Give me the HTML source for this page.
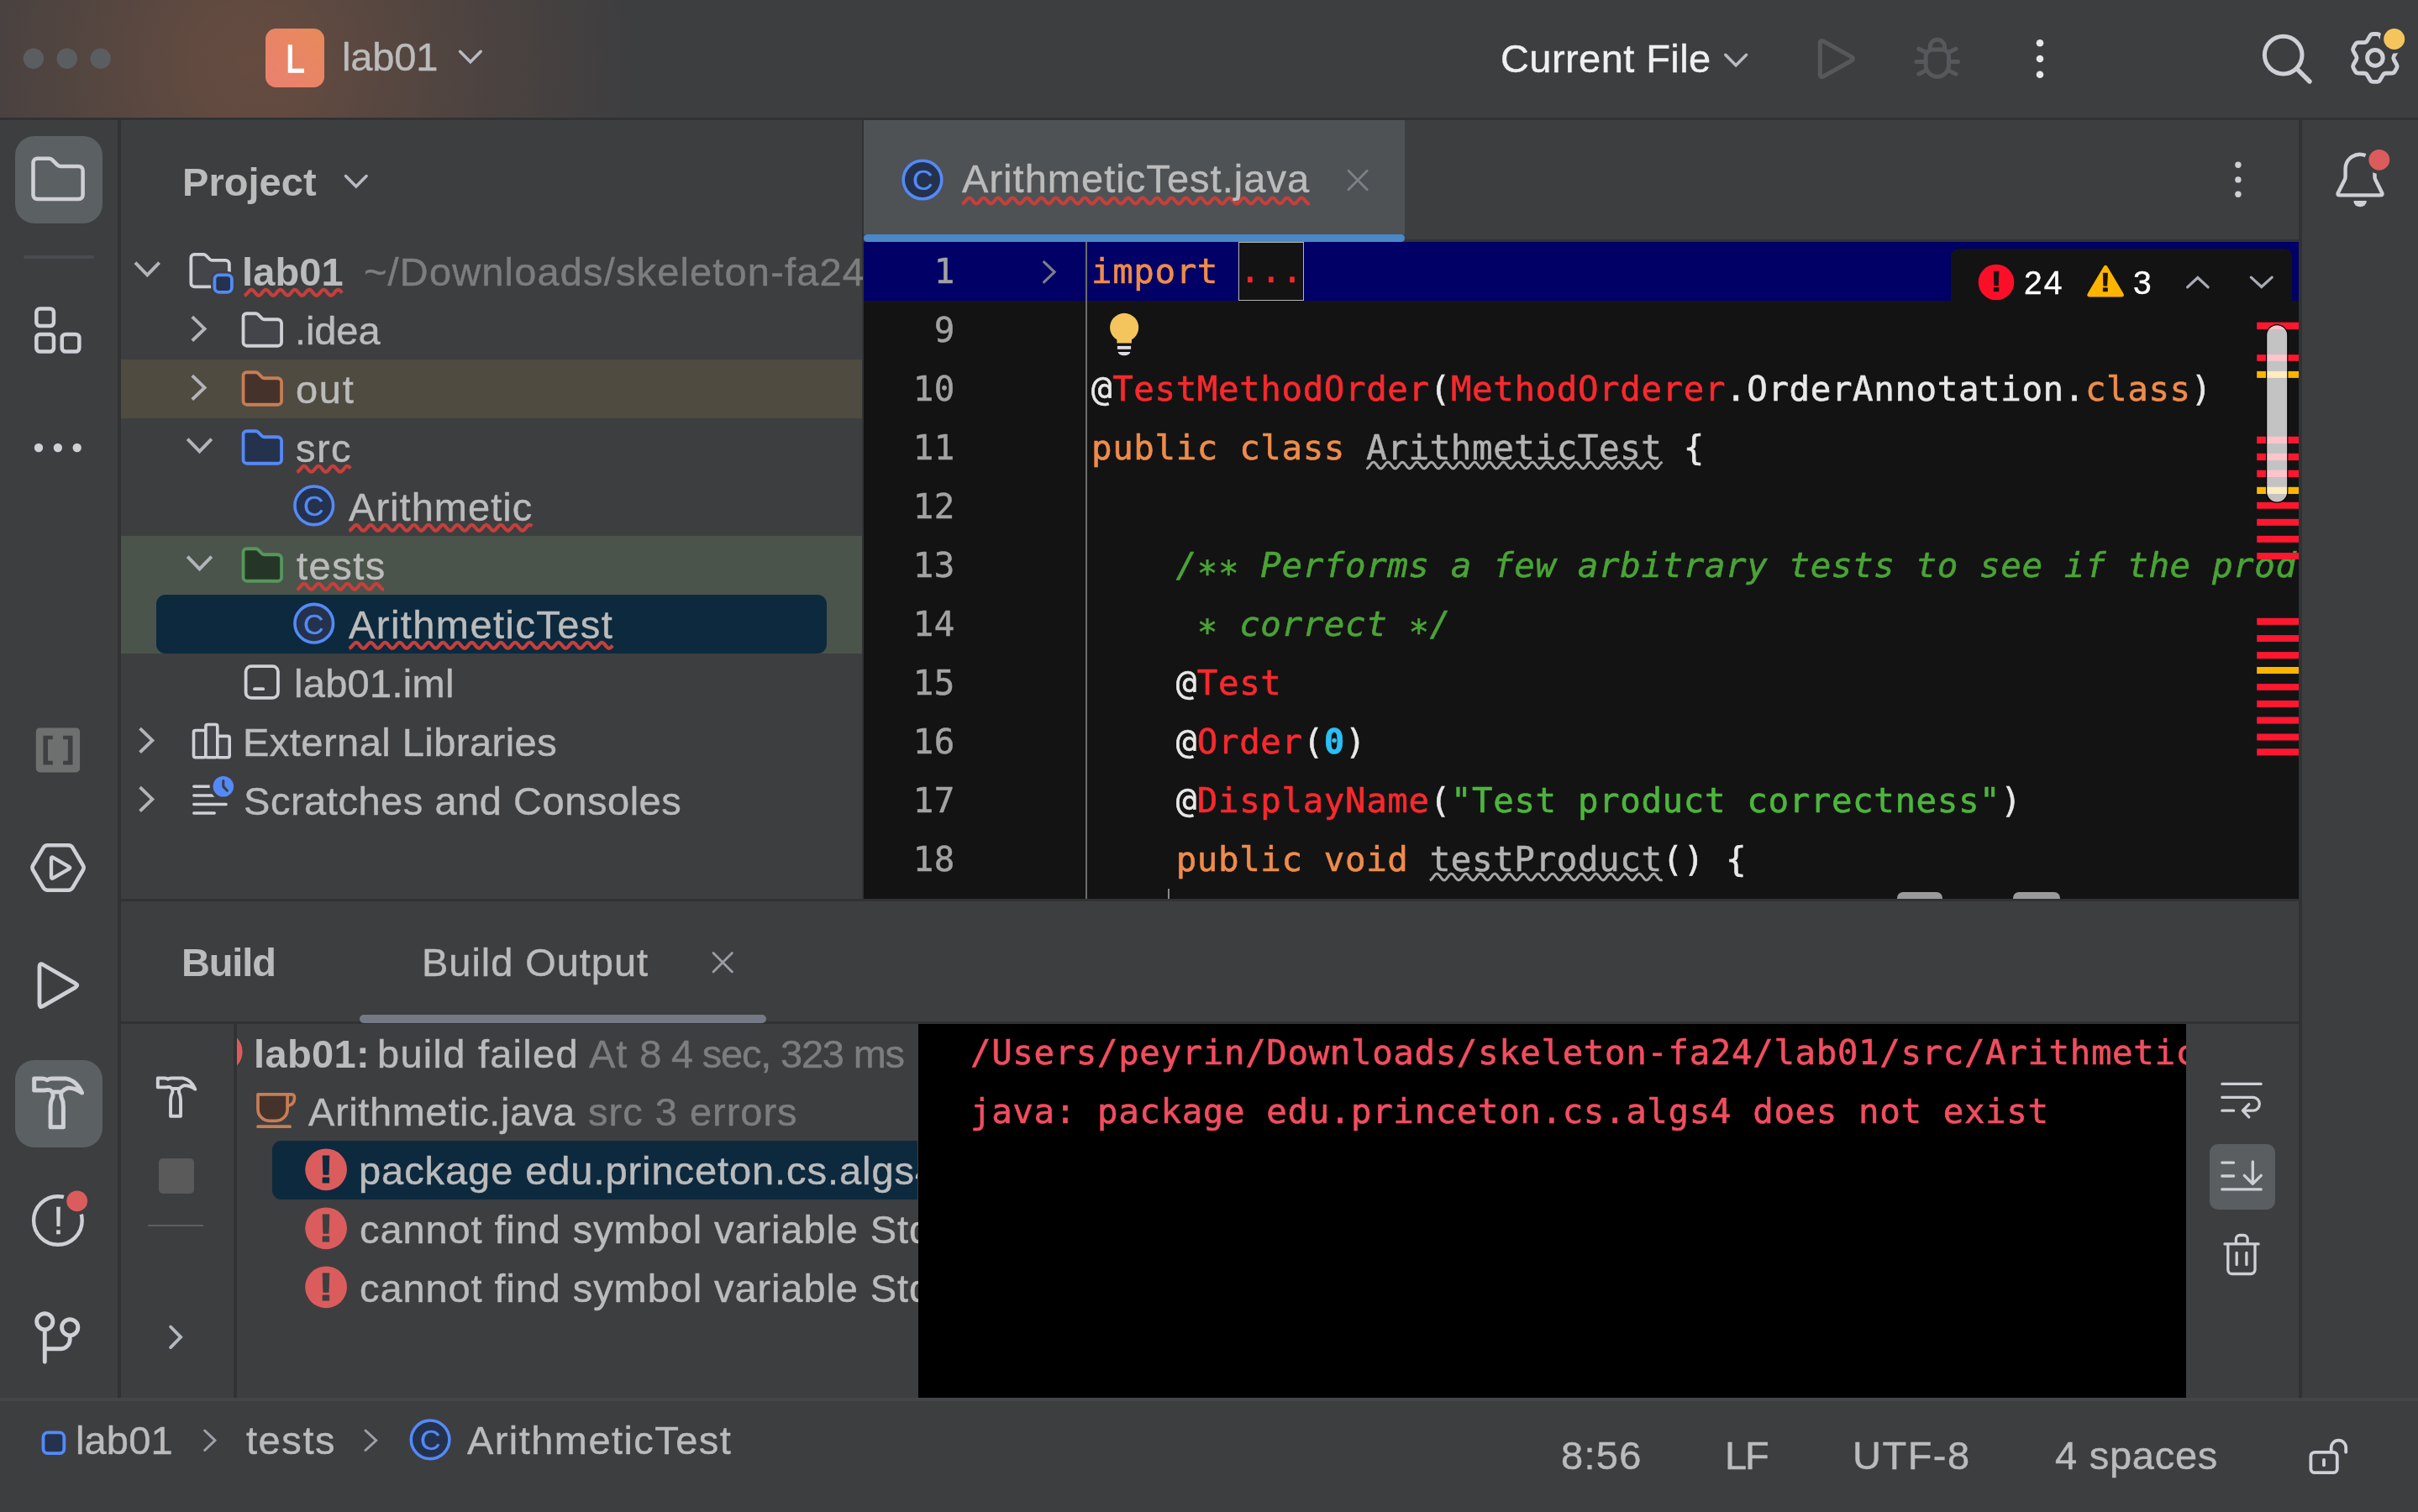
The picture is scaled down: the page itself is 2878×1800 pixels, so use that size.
<!DOCTYPE html><html><head><meta charset="utf-8"><title>lab01 - ArithmeticTest.java</title><style>
html,body{margin:0;padding:0;background:#3d3e40;}
#root{position:relative;width:2878px;height:1800px;overflow:hidden;background:#3d3e40;font-family:"Liberation Sans",sans-serif;}
.b{position:absolute;}
.t{position:absolute;white-space:pre;will-change:transform;}
svg{position:absolute;left:0;top:0;}
.code{will-change:transform;position:absolute;left:1299.0px;white-space:pre;font-family:"DejaVu Sans Mono", "Liberation Mono", monospace;font-size:40.8px;line-height:70px;height:70px;letter-spacing:0.606px;color:#e6e6e6;-webkit-text-stroke:0.6px;}
.ln{will-change:transform;position:absolute;white-space:pre;font-family:"DejaVu Sans Mono", "Liberation Mono", monospace;font-size:40.8px;line-height:70px;height:70px;width:120px;text-align:right;left:1017px;color:#a2a2a2;-webkit-text-stroke:0.5px;letter-spacing:0.606px;}
.k{color:#ef8c4a;} .a{color:#f8292d;} .w{color:#e8e8e8;} .g{color:#b2b2b2;} .c{color:#4aa336;font-style:italic;} .s{color:#4db53c;} .n{color:#2bbff5;font-weight:bold;} .c i{position:relative;top:10px;}
.fold{color:#f5262a;display:inline-block;height:67.6px;line-height:67.6px;margin:0 -1.6px 0 -0.8px;border:1.2px solid #b4b4b4;background:#131314;vertical-align:top;}
.con{will-change:transform;position:absolute;left:1155px;white-space:pre;font-family:"DejaVu Sans Mono", "Liberation Mono", monospace;font-size:40.8px;line-height:70px;height:70px;letter-spacing:0.606px;color:#f24d5f;-webkit-text-stroke:0.6px;}

</style></head><body><div id="root">
<div class="b" style="left:0.0px;top:0.0px;width:2878.0px;height:140.0px;background:#3d3e40;background:radial-gradient(circle 460px at 298px 75px,#654b40 0%,#614a40 16%,#554640 40%,#4a4240 65%,#444040 81%,#3e3e40 97%,#3d3e40 100%);"></div>
<div class="b" style="left:0.0px;top:139.5px;width:2878.0px;height:3.0px;background:#313233;"></div>
<div class="b" style="left:140.0px;top:142.5px;width:4.0px;height:1521.5px;background:#313233;"></div>
<div class="b" style="left:2736.0px;top:142.5px;width:3.6px;height:1521.5px;background:#313233;"></div>
<div class="b" style="left:1026.0px;top:142.5px;width:2.3px;height:928.0px;background:#313233;"></div>
<div class="b" style="left:144.0px;top:1070.0px;width:2592.0px;height:2.6px;background:#313233;"></div>
<div class="b" style="left:144.0px;top:1216.0px;width:2592.0px;height:2.5px;background:#313233;"></div>
<div class="b" style="left:278.0px;top:1218.5px;width:4.0px;height:445.5px;background:#313233;"></div>
<div class="b" style="left:0.0px;top:1664.0px;width:2878.0px;height:3.5px;background:#434548;"></div>
<div class="b" style="left:18.0px;top:162.0px;width:104.0px;height:104.0px;background:#5b6063;border-radius:23px;"></div>
<div class="b" style="left:18.0px;top:1262.0px;width:104.0px;height:104.0px;background:#5b6063;border-radius:23px;"></div>
<div class="b" style="left:28.0px;top:304.0px;width:84.0px;height:3.6px;background:#494b50;border-radius:2px;"></div>
<div class="b" style="left:144.0px;top:428.0px;width:882.0px;height:70.0px;background:#4f4b41;"></div>
<div class="b" style="left:144.0px;top:638.0px;width:882.0px;height:140.0px;background:#4a544b;"></div>
<div class="b" style="left:186.0px;top:708.3px;width:798.0px;height:69.4px;background:#0d293e;border-radius:11px;"></div>
<div class="b" style="left:1028.3px;top:142.5px;width:644.0px;height:136.5px;background:#4e5254;"></div>
<div class="b" style="left:1672.3px;top:285.0px;width:1063.7px;height:2.6px;background:#313233;"></div>
<div class="b" style="left:1028.3px;top:278.5px;width:644.0px;height:9.0px;background:#4a88c7;border-radius:4.5px;"></div>
<div class="b" style="left:1028.3px;top:287.5px;width:1707.7px;height:782.5px;background:#131314;"></div>
<div class="b" style="left:1028.3px;top:287.5px;width:1707.7px;height:70.0px;background:#000066;"></div>
<div class="b" style="left:1291.7px;top:287.5px;width:2.2px;height:782.5px;background:#6b6d6b;"></div>
<div class="b" style="left:1390.2px;top:1058.0px;width:1.6px;height:12.0px;background:#8a8a8a;"></div>
<div class="b" style="left:2322.2px;top:296.0px;width:405.8px;height:62.0px;background:#131314;border-radius:9px 9px 0 0;"></div>
<div class="b" style="left:2258.0px;top:1062.0px;width:54.0px;height:8.0px;background:#9a9a9a;border-radius:7px 7px 0 0;"></div>
<div class="b" style="left:2395.7px;top:1062.0px;width:56.3px;height:8.0px;background:#9a9a9a;border-radius:7px 7px 0 0;"></div>
<div class="b" style="left:427.8px;top:1207.8px;width:484.4px;height:10.4px;background:#747a85;border-radius:5px;"></div>
<div class="b" style="left:324.0px;top:1358.0px;width:768.0px;height:70.0px;background:#0d293e;border-radius:11px 0 0 11px;"></div>
<div class="b" style="left:1093.4px;top:1218.5px;width:1508.8px;height:445.5px;background:#000000;"></div>
<div class="b" style="left:2629.8px;top:1362.0px;width:78.4px;height:77.6px;background:#5a5e61;border-radius:10px;"></div>
<div class="b" style="left:176.2px;top:1458.4px;width:65.7px;height:2.0px;background:#5c5e61;"></div>
<div class="b" style="left:189.0px;top:1379.0px;width:42.0px;height:42.0px;background:#5a5a5a;border-radius:5px;"></div>
<div class="b" style="left:316.0px;top:34.0px;width:70.0px;height:70.0px;background:#e8805f;border-radius:12.5px;background:linear-gradient(45deg,#ea8070 0%,#e78a5a 100%);"></div>
<div class="ln" style="top:288.1px">1</div>
<div class="code" style="top:288.1px;width:1434.6px;overflow:hidden"><span class="k">import</span> <span class="fold">...</span></div>
<div class="ln" style="top:358.1px">9</div>
<div class="ln" style="top:428.1px">10</div>
<div class="code" style="top:428.1px;width:1434.6px;overflow:hidden"><span class="w">@</span><span class="a">TestMethodOrder</span><span class="w">(</span><span class="a">MethodOrderer</span><span class="w">.OrderAnnotation.</span><span class="k">class</span><span class="w">)</span></div>
<div class="ln" style="top:498.1px">11</div>
<div class="code" style="top:498.1px;width:1434.6px;overflow:hidden"><span class="k">public class</span> <span class="g">ArithmeticTest</span><span class="w"> {</span></div>
<div class="ln" style="top:568.1px">12</div>
<div class="ln" style="top:638.1px">13</div>
<div class="code" style="top:638.1px;width:1434.6px;overflow:hidden">    <span class="c">/<i>*</i><i>*</i> Performs a few arbitrary tests to see if the product is</span></div>
<div class="ln" style="top:708.1px">14</div>
<div class="code" style="top:708.1px;width:1434.6px;overflow:hidden">    <span class="c"> <i>*</i> correct <i>*</i>/</span></div>
<div class="ln" style="top:778.1px">15</div>
<div class="code" style="top:778.1px;width:1434.6px;overflow:hidden">    <span class="w">@</span><span class="a">Test</span></div>
<div class="ln" style="top:848.1px">16</div>
<div class="code" style="top:848.1px;width:1434.6px;overflow:hidden">    <span class="w">@</span><span class="a">Order</span><span class="w">(</span><span class="n">0</span><span class="w">)</span></div>
<div class="ln" style="top:918.1px">17</div>
<div class="code" style="top:918.1px;width:1434.6px;overflow:hidden">    <span class="w">@</span><span class="a">DisplayName</span><span class="w">(</span><span class="s">&quot;Test product correctness&quot;</span><span class="w">)</span></div>
<div class="ln" style="top:988.1px">18</div>
<div class="code" style="top:988.1px;width:1434.6px;overflow:hidden">    <span class="k">public void</span> <span class="g">testProduct</span><span class="w">() {</span></div>
<div class="con" style="top:1217.5px;width:1447px;overflow:hidden">/Users/peyrin/Downloads/skeleton-fa24/lab01/src/Arithmetic.java:3:33</div>
<div class="con" style="top:1287.5px">java: package edu.princeton.cs.algs4 does not exist</div>
<svg width="2878" height="1800" viewBox="0 0 2878 1800"><circle cx="39.9" cy="69.7" r="12.2" fill="#5b5e61"/>
<circle cx="79.8" cy="69.7" r="12.2" fill="#5b5e61"/>
<circle cx="119.7" cy="69.7" r="12.2" fill="#5b5e61"/>
<path d="M547.55 61.35L559.90 73.83L572.25 61.35" fill="none" stroke="#b8bbc2" stroke-width="3.5" stroke-linecap="round" stroke-linejoin="miter"/>
<path d="M411.45 209.55L423.80 222.03L436.15 209.55" fill="none" stroke="#b8bbc2" stroke-width="3.5" stroke-linecap="round" stroke-linejoin="miter"/>
<path d="M2053.75 65.25L2066.15 77.73L2078.55 65.25" fill="none" stroke="#b8bbc2" stroke-width="3.5" stroke-linecap="round" stroke-linejoin="miter"/>
<path d="M2170.66 49.25Q2166.30 46.80 2166.30 51.80L2166.30 88.20Q2166.30 93.20 2170.66 90.75L2203.24 72.45Q2207.60 70.00 2203.24 67.55Z" fill="none" stroke="#56585c" stroke-width="5" stroke-linejoin="round"/>
<path d="M2292.2 67A8 8 0 0 1 2300.2 59H2311.5A8 8 0 0 1 2319.5 67V77.5A13.65 13.65 0 0 1 2292.2 77.5ZM2297.2 58V55.8A8.65 8.65 0 0 1 2314.5 55.8V58M2291 61.8L2283.8 58.2M2320.6 61.8L2327.9 58.2M2281 73.5H2290.1M2322 73.5H2330.6M2291 84.6L2283.8 88.2M2320.6 84.6L2327.9 88.2" fill="none" stroke="#56585c" stroke-width="5" stroke-linecap="round" stroke-linejoin="round"/>
<circle cx="2428" cy="51.2" r="4.3" fill="#e8e8e8"/>
<circle cx="2428" cy="70" r="4.3" fill="#e8e8e8"/>
<circle cx="2428" cy="88.8" r="4.3" fill="#e8e8e8"/>
<circle cx="2717.7" cy="65.6" r="22.3" fill="none" stroke="#ced0d6" stroke-width="5"/><path d="M2733.8 81.8L2749 97" stroke="#ced0d6" stroke-width="5.4" stroke-linecap="round"/>
<path d="M2832.78 42.54Q2831.55 40.48 2829.15 40.48L2824.65 40.48Q2822.25 40.48 2821.02 42.54L2817.52 48.47Q2816.30 50.54 2813.90 50.56L2807.01 50.63Q2804.61 50.66 2803.41 52.74L2801.16 56.64Q2799.96 58.72 2801.14 60.81L2804.52 66.81Q2805.70 68.90 2804.52 70.99L2801.14 76.99Q2799.96 79.08 2801.16 81.16L2803.41 85.06Q2804.61 87.14 2807.01 87.17L2813.90 87.24Q2816.30 87.26 2817.52 89.33L2821.02 95.26Q2822.25 97.32 2824.65 97.32L2829.15 97.32Q2831.55 97.32 2832.78 95.26L2836.28 89.33Q2837.50 87.26 2839.90 87.24L2846.79 87.17Q2849.19 87.14 2850.39 85.06L2852.64 81.16Q2853.84 79.08 2852.66 76.99L2849.28 70.99Q2848.10 68.90 2849.28 66.81L2852.66 60.81Q2853.84 58.72 2852.64 56.64L2850.39 52.74Q2849.19 50.66 2846.79 50.63L2839.90 50.56Q2837.50 50.54 2836.28 48.47Z" fill="none" stroke="#ced0d6" stroke-width="4.8" stroke-linejoin="round"/><circle cx="2826.9" cy="68.9" r="9.3" fill="none" stroke="#ced0d6" stroke-width="5"/>
<circle cx="2849.7" cy="46.5" r="17" fill="#3d3e40"/><circle cx="2849.7" cy="46.5" r="12.5" fill="#f3c55c"/>
<path d="M2815.6 185.15A17.3 17.3 0 0 0 2791.6 201.1V210.5Q2791.6 212.5 2790.6 214.3L2782.9 229.5Q2781.6 232.4 2784.8 232.4H2833.2Q2836.4 232.4 2835.1 229.5L2827.5 214.3Q2826.5 212.5 2826.5 210.5V203" fill="none" stroke="#ced0d6" stroke-width="4.4" stroke-linejoin="round"/>
<path d="M2801.3 239H2816.9A7.8 7.4 0 0 1 2801.3 239Z" fill="#ced0d6"/>
<circle cx="2831.8" cy="190.3" r="16.6" fill="#3d3e40"/><circle cx="2831.8" cy="190.3" r="12.4" fill="#db5c5c"/>
<circle cx="2663.9" cy="196.3" r="3.7" fill="#ced0d6"/>
<circle cx="2663.9" cy="213.9" r="3.7" fill="#ced0d6"/>
<circle cx="2663.9" cy="231.3" r="3.7" fill="#ced0d6"/>
<path d="M39.5 193.7A5 5 0 0 1 44.5 188.7H58.5A5 5 0 0 1 62 190.16L68.3 196.46A5 5 0 0 0 71.8 197.9H93.6A5 5 0 0 1 98.6 202.9V232A5 5 0 0 1 93.6 237H44.5A5 5 0 0 1 39.5 232Z" fill="none" stroke="#ced0d6" stroke-width="4.5"/>
<rect x="43.35" y="367.45" width="20.6" height="20.6" rx="4.3" fill="none" stroke="#ced0d6" stroke-width="4.5"/>
<rect x="43.35" y="397.95" width="20.6" height="20.6" rx="4.3" fill="none" stroke="#ced0d6" stroke-width="4.5"/>
<rect x="73.75" y="397.95" width="20.6" height="20.6" rx="4.3" fill="none" stroke="#ced0d6" stroke-width="4.5"/>
<circle cx="46" cy="533" r="5.2" fill="#ced0d6"/>
<circle cx="68.9" cy="533" r="5.2" fill="#ced0d6"/>
<circle cx="91.7" cy="533" r="5.2" fill="#ced0d6"/>
<rect x="42.8" y="866.5" width="52.3" height="52.9" rx="4.5" fill="#6e6f6f"/>
<path d="M51.4 875.7H62.8V880.3H57V905.8H62.8V910.4H51.4ZM86.5 875.7H75.1V880.3H80.9V905.8H75.1V910.4H86.5Z" fill="#3f4042"/>
<path d="M39.37 1036.02Q37.60 1033.00 39.37 1029.98L51.53 1009.32Q53.30 1006.30 56.80 1006.30L81.30 1006.30Q84.80 1006.30 86.57 1009.32L98.73 1029.98Q100.50 1033.00 98.73 1036.02L86.57 1056.68Q84.80 1059.70 81.30 1059.70L56.80 1059.70Q53.30 1059.70 51.53 1056.68Z" fill="none" stroke="#ced0d6" stroke-width="4.6" stroke-linejoin="round"/>
<path d="M63.17 1020.85Q61.00 1019.60 61.00 1022.10L61.00 1044.10Q61.00 1046.60 63.17 1045.35L82.23 1034.35Q84.40 1033.10 82.23 1031.85Z" fill="none" stroke="#ced0d6" stroke-width="4.3" stroke-linejoin="round"/>
<path d="M51.33 1148.50Q47.00 1146.00 47.00 1151.00L47.00 1195.20Q47.00 1200.20 51.33 1197.70L89.57 1175.60Q93.90 1173.10 89.57 1170.60Z" fill="none" stroke="#ced0d6" stroke-width="4.8" stroke-linejoin="round"/>
<path d="M40.7 1284.1H50.4Q53 1284.1 56.1 1285.7Q59 1284.1 61.9 1284.1H79Q91.5 1286.5 97.5 1300.9Q89 1294.8 80.9 1295.2Q77 1296.5 73.3 1300H61.9Q60 1297.6 58 1297.6Q56 1297.2 53 1298H40.7ZM63 1301.9V1305.7Q60.1 1311 60.1 1317.1V1341.8H75.4V1317.1Q75.4 1311 72.8 1305.7V1301.9" fill="none" stroke="#ced0d6" stroke-width="5" stroke-linejoin="round"/>
<g transform="translate(185.7 1281.3) scale(.784) translate(-38 -1281.3)"><path d="M40.7 1284.1H50.4Q53 1284.1 56.1 1285.7Q59 1284.1 61.9 1284.1H79Q91.5 1286.5 97.5 1300.9Q89 1294.8 80.9 1295.2Q77 1296.5 73.3 1300H61.9Q60 1297.6 58 1297.6Q56 1297.2 53 1298H40.7ZM63 1301.9V1305.7Q60.1 1311 60.1 1317.1V1341.8H75.4V1317.1Q75.4 1311 72.8 1305.7V1301.9" fill="none" stroke="#ced0d6" stroke-width="5" stroke-linejoin="round"/></g>
<circle cx="68.9" cy="1453" r="28.8" fill="none" stroke="#ced0d6" stroke-width="4.4"/>
<circle cx="91.7" cy="1429.8" r="16.6" fill="#3d3e40"/><circle cx="91.7" cy="1429.8" r="12.4" fill="#db5c5c"/>
<circle cx="53.3" cy="1573.3" r="9.6" fill="none" stroke="#ced0d6" stroke-width="4.9"/><circle cx="83.2" cy="1580.3" r="9.6" fill="none" stroke="#ced0d6" stroke-width="4.9"/><path d="M53.3 1583.2V1621.2M83.2 1590.2V1594.7A11 11 0 0 1 72.2 1605.7H53.3" fill="none" stroke="#ced0d6" stroke-width="4.9" stroke-linecap="round"/>
<path d="M160.98 312.58L175.30 327.34L189.62 312.58" fill="none" stroke="#b2b4b9" stroke-width="3.9" stroke-linecap="butt" stroke-linejoin="miter"/>
<path d="M223.18 522.58L237.50 537.34L251.82 522.58" fill="none" stroke="#b2b4b9" stroke-width="3.9" stroke-linecap="butt" stroke-linejoin="miter"/>
<path d="M223.18 662.58L237.50 677.34L251.82 662.58" fill="none" stroke="#b2b4b9" stroke-width="3.9" stroke-linecap="butt" stroke-linejoin="miter"/>
<path d="M228.78 377.08L243.54 391.40L228.78 405.72" fill="none" stroke="#b2b4b9" stroke-width="3.9" stroke-linecap="butt" stroke-linejoin="miter"/>
<path d="M228.78 447.08L243.54 461.40L228.78 475.72" fill="none" stroke="#b2b4b9" stroke-width="3.9" stroke-linecap="butt" stroke-linejoin="miter"/>
<path d="M166.58 867.08L181.34 881.40L166.58 895.72" fill="none" stroke="#b2b4b9" stroke-width="3.9" stroke-linecap="butt" stroke-linejoin="miter"/>
<path d="M166.58 937.08L181.34 951.40L166.58 965.72" fill="none" stroke="#b2b4b9" stroke-width="3.9" stroke-linecap="butt" stroke-linejoin="miter"/>
<path transform="translate(222.1 294.1) scale(3.5)" d="M1.5 3.6A1.1 1.1 0 0 1 2.6 2.5H5.75A1.1 1.1 0 0 1 6.53 2.82L7.88 4.18A1.1 1.1 0 0 0 8.66 4.5H13.2A1.3 1.3 0 0 1 14.5 5.8V12.3A1.2 1.2 0 0 1 13.3 13.5H2.7A1.2 1.2 0 0 1 1.5 12.3Z" fill="#43454a" stroke="#ced0d6" stroke-width="1.08"/>
<rect x="253.6" y="325.4" width="24.2" height="24.2" rx="7" fill="#3d3e40" stroke="#3d3e40" stroke-width="5"/>
<rect x="255.4" y="327.3" width="20.5" height="20.5" rx="5.3" fill="#25324d" stroke="#548af7" stroke-width="3.8"/>
<path transform="translate(284.3 364.5) scale(3.5)" d="M1.5 3.6A1.1 1.1 0 0 1 2.6 2.5H5.75A1.1 1.1 0 0 1 6.53 2.82L7.88 4.18A1.1 1.1 0 0 0 8.66 4.5H13.2A1.3 1.3 0 0 1 14.5 5.8V12.3A1.2 1.2 0 0 1 13.3 13.5H2.7A1.2 1.2 0 0 1 1.5 12.3Z" fill="#43454a" stroke="#ced0d6" stroke-width="1.08"/>
<path transform="translate(284.3 434.5) scale(3.5)" d="M1.5 3.6A1.1 1.1 0 0 1 2.6 2.5H5.75A1.1 1.1 0 0 1 6.53 2.82L7.88 4.18A1.1 1.1 0 0 0 8.66 4.5H13.2A1.3 1.3 0 0 1 14.5 5.8V12.3A1.2 1.2 0 0 1 13.3 13.5H2.7A1.2 1.2 0 0 1 1.5 12.3Z" fill="#45322b" stroke="#c77d55" stroke-width="1.08"/>
<path transform="translate(284.3 504.5) scale(3.5)" d="M1.5 3.6A1.1 1.1 0 0 1 2.6 2.5H5.75A1.1 1.1 0 0 1 6.53 2.82L7.88 4.18A1.1 1.1 0 0 0 8.66 4.5H13.2A1.3 1.3 0 0 1 14.5 5.8V12.3A1.2 1.2 0 0 1 13.3 13.5H2.7A1.2 1.2 0 0 1 1.5 12.3Z" fill="#25324d" stroke="#548af7" stroke-width="1.08"/>
<path transform="translate(284.3 644.5) scale(3.5)" d="M1.5 3.6A1.1 1.1 0 0 1 2.6 2.5H5.75A1.1 1.1 0 0 1 6.53 2.82L7.88 4.18A1.1 1.1 0 0 0 8.66 4.5H13.2A1.3 1.3 0 0 1 14.5 5.8V12.3A1.2 1.2 0 0 1 13.3 13.5H2.7A1.2 1.2 0 0 1 1.5 12.3Z" fill="#253627" stroke="#57965c" stroke-width="1.08"/>
<circle cx="373.75" cy="601.8" r="22.8" fill="#25324d" stroke="#548af7" stroke-width="3.6"/>
<circle cx="373.75" cy="742.2" r="22.8" fill="#25324d" stroke="#548af7" stroke-width="3.6"/>
<circle cx="1098" cy="214" r="22.8" fill="#25324d" stroke="#548af7" stroke-width="3.6"/>
<circle cx="512.1" cy="1713.8" r="22.8" fill="#25324d" stroke="#548af7" stroke-width="3.6"/>
<rect x="292.6" y="793.1" width="38.3" height="37.8" rx="6.5" fill="none" stroke="#ced0d6" stroke-width="3.8"/><path d="M303 820.2H313.2" stroke="#ced0d6" stroke-width="3.8" stroke-linecap="round"/>
<rect x="230.5" y="869.5" width="14.4" height="32.25" rx="2.2" fill="#43454a" stroke="#ced0d6" stroke-width="3.6"/>
<rect x="244.9" y="862.5" width="13.9" height="39.25" rx="2.2" fill="#43454a" stroke="#ced0d6" stroke-width="3.6"/>
<rect x="258.8" y="876.4" width="14.4" height="25.35" rx="2.2" fill="#43454a" stroke="#ced0d6" stroke-width="3.6"/>
<path d="M230.8 936.2H252M230.8 946.9H258M230.8 957.4H269.1M230.8 968H255.2" stroke="#ced0d6" stroke-width="3.5" stroke-linecap="round"/>
<circle cx="265.8" cy="936.2" r="16.2" fill="#3d3e40"/><circle cx="265.8" cy="936.2" r="12.3" fill="#548af7"/><path d="M265.8 929.6V936.4L270.4 941.2" fill="none" stroke="#3a3d42" stroke-width="3" stroke-linecap="round" stroke-linejoin="round"/>
<path d="M290.7 351.8L292.2 351.3L293.7 349.9L295.2 348.1L296.7 346.3L298.2 345.1L299.7 344.8L301.2 345.6L302.6 347.1L304.1 349.0L305.6 350.7L307.1 351.7L308.6 351.7L310.1 350.7L311.6 349.0L313.1 347.2L314.6 345.6L316.1 344.8L317.6 345.1L319.1 346.2L320.6 348.0L322.1 349.9L323.6 351.3L325.1 351.8L326.5 351.3L328.0 350.0L329.5 348.1L331.0 346.3L332.5 345.1L334.0 344.8L335.5 345.5L337.0 347.1L338.5 348.9L340.0 350.6L341.5 351.6L343.0 351.7L344.5 350.8L346.0 349.1L347.5 347.2L348.9 345.7L350.4 344.8L351.9 345.0L353.4 346.2L354.9 347.9L356.4 349.8L357.9 351.2L359.4 351.8L360.9 351.4L362.4 350.0L363.9 348.2L365.4 346.4L366.9 345.1L368.4 344.8L369.9 345.5L371.4 347.0L372.8 348.9L374.3 350.6L375.8 351.6L377.3 351.7L378.8 350.8L380.3 349.2L381.8 347.3L383.3 345.7L384.8 344.9L386.3 345.0L387.8 346.1L389.3 347.9L390.8 349.8L392.3 351.2L393.8 351.8L395.3 351.4L396.7 350.1L398.2 348.3L399.7 346.4L401.2 345.2L402.7 344.8L404.2 345.5L405.7 346.9L407.2 348.8" fill="none" stroke="#c63f3b" stroke-width="4.2" stroke-linejoin="round" stroke-linecap="butt"/>
<path d="M353.3 561.8L354.8 561.3L356.3 559.9L357.8 558.1L359.3 556.3L360.7 555.1L362.2 554.8L363.7 555.5L365.2 557.1L366.7 558.9L368.2 560.6L369.7 561.6L371.2 561.7L372.6 560.8L374.1 559.1L375.6 557.3L377.1 555.7L378.6 554.9L380.1 555.0L381.6 556.1L383.1 557.9L384.6 559.7L386.0 561.2L387.5 561.8L389.0 561.4L390.5 560.1L392.0 558.3L393.5 556.5L395.0 555.2L396.5 554.8L398.0 555.4L399.4 556.9L400.9 558.7L402.4 560.5L403.9 561.6L405.4 561.7L406.9 560.9L408.4 559.3L409.9 557.5L411.3 555.8L412.8 554.9L414.3 555.0L415.8 556.0L417.3 557.7" fill="none" stroke="#c63f3b" stroke-width="4.2" stroke-linejoin="round" stroke-linecap="butt"/>
<path d="M415.4 631.8L416.9 631.3L418.4 629.9L419.9 628.1L421.4 626.3L422.9 625.1L424.4 624.8L425.8 625.6L427.3 627.1L428.8 629.0L430.3 630.7L431.8 631.7L433.3 631.7L434.8 630.7L436.3 629.1L437.8 627.2L439.3 625.6L440.8 624.8L442.3 625.1L443.7 626.2L445.2 628.0L446.7 629.8L448.2 631.2L449.7 631.8L451.2 631.4L452.7 630.0L454.2 628.2L455.7 626.4L457.2 625.1L458.7 624.8L460.2 625.5L461.6 627.0L463.1 628.9L464.6 630.6L466.1 631.6L467.6 631.7L469.1 630.8L470.6 629.2L472.1 627.3L473.6 625.7L475.1 624.9L476.6 625.0L478.1 626.1L479.5 627.8L481.0 629.7L482.5 631.2L484.0 631.8L485.5 631.4L487.0 630.1L488.5 628.3L490.0 626.5L491.5 625.2L493.0 624.8L494.5 625.4L496.0 626.9L497.4 628.7L498.9 630.5L500.4 631.6L501.9 631.7L503.4 630.9L504.9 629.3L506.4 627.4L507.9 625.8L509.4 624.9L510.9 625.0L512.4 626.0L513.9 627.7L515.3 629.6L516.8 631.1L518.3 631.8L519.8 631.5L521.3 630.2L522.8 628.4L524.3 626.6L525.8 625.3L527.3 624.8L528.8 625.4L530.3 626.8L531.8 628.6L533.3 630.4L534.7 631.5L536.2 631.8L537.7 631.0L539.2 629.4L540.7 627.5L542.2 625.9L543.7 624.9L545.2 624.9L546.7 625.9L548.2 627.6L549.7 629.5L551.2 631.0L552.6 631.8L554.1 631.5L555.6 630.3L557.1 628.5L558.6 626.7L560.1 625.3L561.6 624.8L563.1 625.3L564.6 626.7L566.1 628.5L567.6 630.3L569.1 631.5L570.5 631.8L572.0 631.0L573.5 629.5L575.0 627.6L576.5 626.0L578.0 624.9L579.5 624.9L581.0 625.9L582.5 627.5L584.0 629.4L585.5 631.0L587.0 631.8L588.4 631.5L589.9 630.4L591.4 628.6L592.9 626.8L594.4 625.4L595.9 624.8L597.4 625.2L598.9 626.6L600.4 628.4L601.9 630.2L603.4 631.4L604.9 631.8L606.3 631.1L607.8 629.6L609.3 627.8L610.8 626.0L612.3 625.0L613.8 624.9L615.3 625.8L616.8 627.4L618.3 629.3L619.8 630.9L621.3 631.7L622.8 631.6L624.2 630.5L625.7 628.8L627.2 626.9L628.7 625.4L630.2 624.8L631.7 625.2L633.2 626.5" fill="none" stroke="#c63f3b" stroke-width="4.2" stroke-linejoin="round" stroke-linecap="butt"/>
<path d="M353.3 701.8L354.8 701.3L356.3 699.9L357.7 698.1L359.2 696.3L360.7 695.1L362.2 694.8L363.7 695.5L365.2 697.0L366.6 698.9L368.1 700.6L369.6 701.6L371.1 701.7L372.6 700.8L374.1 699.2L375.5 697.4L377.0 695.8L378.5 694.9L380.0 695.0L381.5 696.0L383.0 697.7L384.4 699.6L385.9 701.1L387.4 701.8L388.9 701.5L390.4 700.3L391.9 698.5L393.3 696.7L394.8 695.3L396.3 694.8L397.8 695.3L399.3 696.7L400.8 698.5L402.2 700.3L403.7 701.5L405.2 701.8L406.7 701.1L408.2 699.6L409.6 697.7L411.1 696.0L412.6 695.0L414.1 694.9L415.6 695.8L417.1 697.4L418.5 699.2L420.0 700.8L421.5 701.7L423.0 701.6L424.5 700.6L426.0 698.9L427.4 697.0L428.9 695.5L430.4 694.8L431.9 695.1L433.4 696.3L434.9 698.1L436.3 699.9L437.8 701.3L439.3 701.8L440.8 701.3L442.3 699.9L443.8 698.1L445.2 696.3L446.7 695.1L448.2 694.8L449.7 695.5L451.2 697.0L452.7 698.9L454.1 700.6L455.6 701.6L457.1 701.7" fill="none" stroke="#c63f3b" stroke-width="4.2" stroke-linejoin="round" stroke-linecap="butt"/>
<path d="M415.4 771.8L416.9 771.3L418.4 769.9L419.9 768.1L421.4 766.3L422.9 765.1L424.4 764.8L425.9 765.6L427.4 767.1L428.8 769.0L430.3 770.7L431.8 771.7L433.3 771.7L434.8 770.7L436.3 769.0L437.8 767.2L439.3 765.6L440.8 764.8L442.3 765.1L443.8 766.3L445.3 768.0L446.8 769.9L448.3 771.3L449.8 771.8L451.3 771.3L452.8 769.9L454.3 768.1L455.7 766.3L457.2 765.1L458.7 764.8L460.2 765.6L461.7 767.1L463.2 769.0L464.7 770.6L466.2 771.7L467.7 771.7L469.2 770.7L470.7 769.1L472.2 767.2L473.7 765.6L475.2 764.8L476.7 765.1L478.2 766.2L479.7 768.0L481.1 769.8L482.6 771.2L484.1 771.8L485.6 771.3L487.1 770.0L488.6 768.1L490.1 766.4L491.6 765.1L493.1 764.8L494.6 765.5L496.1 767.0L497.6 768.9L499.1 770.6L500.6 771.6L502.1 771.7L503.6 770.8L505.1 769.1L506.6 767.2L508.0 765.7L509.5 764.8L511.0 765.0L512.5 766.2L514.0 767.9L515.5 769.8L517.0 771.2L518.5 771.8L520.0 771.4L521.5 770.0L523.0 768.2L524.5 766.4L526.0 765.1L527.5 764.8L529.0 765.5L530.5 767.0L532.0 768.9L533.4 770.6L534.9 771.6L536.4 771.7L537.9 770.8L539.4 769.2L540.9 767.3L542.4 765.7L543.9 764.9L545.4 765.0L546.9 766.2L548.4 767.9L549.9 769.8L551.4 771.2L552.9 771.8L554.4 771.4L555.9 770.1L557.4 768.2L558.9 766.4L560.3 765.2L561.8 764.8L563.3 765.5L564.8 767.0L566.3 768.8L567.8 770.6L569.3 771.6L570.8 771.7L572.3 770.8L573.8 769.2L575.3 767.3L576.8 765.7L578.3 764.9L579.8 765.0L581.3 766.1L582.8 767.9L584.3 769.7L585.7 771.2L587.2 771.8L588.7 771.4L590.2 770.1L591.7 768.3L593.2 766.5L594.7 765.2L596.2 764.8L597.7 765.5L599.2 766.9L600.7 768.8L602.2 770.5L603.7 771.6L605.2 771.7L606.7 770.8L608.2 769.2L609.7 767.3L611.2 765.7L612.6 764.9L614.1 765.0L615.6 766.1L617.1 767.8L618.6 769.7L620.1 771.2L621.6 771.8L623.1 771.4L624.6 770.1L626.1 768.3L627.6 766.5L629.1 765.2L630.6 764.8L632.1 765.4L633.6 766.9L635.1 768.8L636.6 770.5L638.0 771.6L639.5 771.7L641.0 770.9L642.5 769.3L644.0 767.4L645.5 765.8L647.0 764.9L648.5 765.0L650.0 766.1L651.5 767.8L653.0 769.7L654.5 771.1L656.0 771.8L657.5 771.4L659.0 770.2L660.5 768.3L662.0 766.5L663.5 765.2L664.9 764.8L666.4 765.4L667.9 766.9L669.4 768.7L670.9 770.5L672.4 771.6L673.9 771.7L675.4 770.9L676.9 769.3L678.4 767.4L679.9 765.8L681.4 764.9L682.9 765.0L684.4 766.0L685.9 767.7L687.4 769.6L688.9 771.1L690.3 771.8L691.8 771.4L693.3 770.2L694.8 768.4L696.3 766.6L697.8 765.2L699.3 764.8L700.8 765.4L702.3 766.8L703.8 768.7L705.3 770.4L706.8 771.6L708.3 771.7L709.8 770.9L711.3 769.3L712.8 767.5L714.3 765.8L715.8 764.9L717.2 765.0L718.7 766.0L720.2 767.7L721.7 769.6L723.2 771.1L724.7 771.8L726.2 771.5L727.7 770.2L729.2 768.4" fill="none" stroke="#c63f3b" stroke-width="4.2" stroke-linejoin="round" stroke-linecap="butt"/>
<path d="M1145.0 242.5L1146.5 242.0L1148.0 240.6L1149.5 238.8L1151.0 237.0L1152.5 235.8L1154.0 235.5L1155.5 236.3L1157.0 237.8L1158.5 239.7L1159.9 241.4L1161.4 242.4L1162.9 242.4L1164.4 241.4L1165.9 239.7L1167.4 237.8L1168.9 236.3L1170.4 235.5L1171.9 235.8L1173.4 237.0L1174.9 238.7L1176.4 240.6L1177.9 242.0L1179.4 242.5L1180.9 242.0L1182.4 240.6L1183.9 238.8L1185.4 237.0L1186.8 235.8L1188.3 235.5L1189.8 236.3L1191.3 237.8L1192.8 239.7L1194.3 241.4L1195.8 242.4L1197.3 242.4L1198.8 241.4L1200.3 239.8L1201.8 237.9L1203.3 236.3L1204.8 235.5L1206.3 235.8L1207.8 236.9L1209.3 238.7L1210.8 240.6L1212.3 242.0L1213.8 242.5L1215.2 242.0L1216.7 240.7L1218.2 238.8L1219.7 237.0L1221.2 235.8L1222.7 235.5L1224.2 236.2L1225.7 237.8L1227.2 239.6L1228.7 241.3L1230.2 242.3L1231.7 242.4L1233.2 241.4L1234.7 239.8L1236.2 237.9L1237.7 236.3L1239.2 235.5L1240.7 235.8L1242.1 236.9L1243.6 238.7L1245.1 240.5L1246.6 241.9L1248.1 242.5L1249.6 242.0L1251.1 240.7L1252.6 238.9L1254.1 237.1L1255.6 235.8L1257.1 235.5L1258.6 236.2L1260.1 237.7L1261.6 239.6L1263.1 241.3L1264.6 242.3L1266.1 242.4L1267.6 241.5L1269.1 239.8L1270.5 237.9L1272.0 236.4L1273.5 235.6L1275.0 235.7L1276.5 236.9L1278.0 238.6L1279.5 240.5L1281.0 241.9L1282.5 242.5L1284.0 242.1L1285.5 240.7L1287.0 238.9L1288.5 237.1L1290.0 235.8L1291.5 235.5L1293.0 236.2L1294.5 237.7L1296.0 239.6L1297.4 241.3L1298.9 242.3L1300.4 242.4L1301.9 241.5L1303.4 239.9L1304.9 238.0L1306.4 236.4L1307.9 235.6L1309.4 235.7L1310.9 236.9L1312.4 238.6L1313.9 240.5L1315.4 241.9L1316.9 242.5L1318.4 242.1L1319.9 240.8L1321.4 238.9L1322.9 237.1L1324.4 235.9L1325.8 235.5L1327.3 236.2L1328.8 237.7L1330.3 239.5L1331.8 241.3L1333.3 242.3L1334.8 242.4L1336.3 241.5L1337.8 239.9L1339.3 238.0L1340.8 236.4L1342.3 235.6L1343.8 235.7L1345.3 236.8L1346.8 238.6L1348.3 240.4L1349.8 241.9L1351.3 242.5L1352.7 242.1L1354.2 240.8L1355.7 239.0L1357.2 237.1L1358.7 235.9L1360.2 235.5L1361.7 236.2L1363.2 237.6L1364.7 239.5L1366.2 241.2L1367.7 242.3L1369.2 242.4L1370.7 241.5L1372.2 239.9L1373.7 238.0L1375.2 236.4L1376.7 235.6L1378.2 235.7L1379.6 236.8L1381.1 238.5L1382.6 240.4L1384.1 241.9L1385.6 242.5L1387.1 242.1L1388.6 240.8L1390.1 239.0L1391.6 237.2L1393.1 235.9L1394.6 235.5L1396.1 236.1L1397.6 237.6L1399.1 239.5L1400.6 241.2L1402.1 242.3L1403.6 242.4L1405.1 241.6L1406.6 239.9L1408.0 238.1L1409.5 236.4L1411.0 235.6L1412.5 235.7L1414.0 236.8L1415.5 238.5L1417.0 240.4L1418.5 241.9L1420.0 242.5L1421.5 242.1L1423.0 240.8L1424.5 239.0L1426.0 237.2L1427.5 235.9L1429.0 235.5L1430.5 236.1L1432.0 237.6L1433.5 239.5L1434.9 241.2L1436.4 242.3L1437.9 242.4L1439.4 241.6L1440.9 240.0L1442.4 238.1L1443.9 236.5L1445.4 235.6L1446.9 235.7L1448.4 236.8L1449.9 238.5L1451.4 240.4L1452.9 241.8L1454.4 242.5L1455.9 242.1L1457.4 240.9L1458.9 239.0L1460.4 237.2L1461.9 235.9L1463.3 235.5L1464.8 236.1L1466.3 237.6L1467.8 239.4L1469.3 241.2L1470.8 242.3L1472.3 242.4L1473.8 241.6L1475.3 240.0L1476.8 238.1L1478.3 236.5L1479.8 235.6L1481.3 235.7L1482.8 236.7L1484.3 238.5L1485.8 240.3L1487.3 241.8L1488.8 242.5L1490.2 242.1L1491.7 240.9L1493.2 239.1L1494.7 237.3L1496.2 235.9L1497.7 235.5L1499.2 236.1L1500.7 237.5L1502.2 239.4L1503.7 241.1L1505.2 242.3L1506.7 242.4L1508.2 241.6L1509.7 240.0L1511.2 238.1L1512.7 236.5L1514.2 235.6L1515.7 235.7L1517.2 236.7L1518.6 238.4L1520.1 240.3L1521.6 241.8L1523.1 242.5L1524.6 242.2L1526.1 240.9L1527.6 239.1L1529.1 237.3L1530.6 235.9L1532.1 235.5L1533.6 236.1L1535.1 237.5L1536.6 239.4L1538.1 241.1L1539.6 242.3L1541.1 242.4L1542.6 241.6L1544.1 240.1L1545.5 238.2L1547.0 236.5L1548.5 235.6L1550.0 235.7L1551.5 236.7L1553.0 238.4L1554.5 240.3L1556.0 241.8L1557.5 242.5L1559.0 242.2" fill="none" stroke="#c63f3b" stroke-width="4.2" stroke-linejoin="round" stroke-linecap="butt"/>
<path d="M1626.2 557.9L1627.7 557.3L1629.2 555.8L1630.7 553.7L1632.2 551.7L1633.7 550.4L1635.2 550.1L1636.7 551.0L1638.2 552.7L1639.7 554.8L1641.2 556.7L1642.7 557.8L1644.2 557.7L1645.7 556.6L1647.2 554.7L1648.7 552.6L1650.2 550.9L1651.7 550.1L1653.2 550.5L1654.7 551.8L1656.2 553.8L1657.7 555.9L1659.2 557.4L1660.7 557.9L1662.2 557.3L1663.7 555.7L1665.2 553.6L1666.7 551.6L1668.2 550.4L1669.7 550.2L1671.2 551.1L1672.7 552.9L1674.2 555.0L1675.7 556.8L1677.2 557.8L1678.7 557.7L1680.2 556.5L1681.7 554.6L1683.2 552.5L1684.7 550.8L1686.2 550.1L1687.7 550.5L1689.2 551.9L1690.7 554.0L1692.2 556.0L1693.7 557.5L1695.2 557.9L1696.7 557.2L1698.2 555.6L1699.7 553.5L1701.2 551.5L1702.7 550.3L1704.2 550.2L1705.7 551.2L1707.2 553.0L1708.7 555.1L1710.2 556.9L1711.7 557.8L1713.2 557.7L1714.7 556.4L1716.2 554.5L1717.7 552.4L1719.2 550.8L1720.7 550.1L1722.2 550.6L1723.7 552.1L1725.2 554.1L1726.7 556.1L1728.2 557.5L1729.7 557.9L1731.2 557.1L1732.7 555.4L1734.2 553.3L1735.7 551.4L1737.2 550.3L1738.7 550.2L1740.2 551.3L1741.7 553.1L1743.2 555.2L1744.7 557.0L1746.2 557.8L1747.7 557.6L1749.2 556.3L1750.7 554.3L1752.2 552.3L1753.7 550.7L1755.2 550.1L1756.7 550.6L1758.2 552.2L1759.7 554.2L1761.2 556.2L1762.7 557.6L1764.2 557.9L1765.7 557.0L1767.2 555.3L1768.7 553.2L1770.2 551.3L1771.7 550.2L1773.2 550.2L1774.7 551.3L1776.2 553.2L1777.7 555.3L1779.2 557.0L1780.7 557.9L1782.2 557.6L1783.7 556.2L1785.2 554.2L1786.7 552.2L1788.2 550.6L1789.7 550.1L1791.2 550.7L1792.7 552.3L1794.2 554.3L1795.7 556.3L1797.2 557.6L1798.7 557.8L1800.2 557.0L1801.7 555.2L1803.1 553.1L1804.6 551.3L1806.1 550.2L1807.6 550.3L1809.1 551.4L1810.6 553.3L1812.1 555.4L1813.6 557.1L1815.1 557.9L1816.6 557.5L1818.1 556.1L1819.6 554.1L1821.1 552.0L1822.6 550.6L1824.1 550.1L1825.6 550.8L1827.1 552.4L1828.6 554.5L1830.1 556.4L1831.6 557.7L1833.1 557.8L1834.6 556.9L1836.1 555.1L1837.6 553.0L1839.1 551.2L1840.6 550.2L1842.1 550.3L1843.6 551.5L1845.1 553.5L1846.6 555.6L1848.1 557.2L1849.6 557.9L1851.1 557.5L1852.6 556.0L1854.1 554.0L1855.6 551.9L1857.1 550.5L1858.6 550.1L1860.1 550.8L1861.6 552.5L1863.1 554.6L1864.6 556.5L1866.1 557.7L1867.6 557.8L1869.1 556.8L1870.6 555.0L1872.1 552.9L1873.6 551.1L1875.1 550.2L1876.6 550.4L1878.1 551.6L1879.6 553.6L1881.1 555.7L1882.6 557.3L1884.1 557.9L1885.6 557.4L1887.1 555.9L1888.6 553.8L1890.1 551.8L1891.6 550.5L1893.1 550.1L1894.6 550.9L1896.1 552.6L1897.6 554.7L1899.1 556.6L1900.6 557.7L1902.1 557.8L1903.6 556.7L1905.1 554.8L1906.6 552.7L1908.1 551.0L1909.6 550.1L1911.1 550.4L1912.6 551.7L1914.1 553.7L1915.6 555.8L1917.1 557.3L1918.6 557.9L1920.1 557.3L1921.6 555.8L1923.1 553.7L1924.6 551.7L1926.1 550.4L1927.6 550.1L1929.1 551.0L1930.6 552.7L1932.1 554.8L1933.6 556.7L1935.1 557.8L1936.6 557.7L1938.1 556.6L1939.6 554.7L1941.1 552.6L1942.6 550.9L1944.1 550.1L1945.6 550.5L1947.1 551.8L1948.6 553.8L1950.1 555.9L1951.6 557.4L1953.1 557.9L1954.6 557.3L1956.1 555.7L1957.6 553.6L1959.1 551.6L1960.6 550.4L1962.1 550.2L1963.6 551.1L1965.1 552.9L1966.6 555.0L1968.1 556.8L1969.6 557.8L1971.1 557.7L1972.6 556.5L1974.1 554.6L1975.6 552.5L1977.1 550.8L1978.6 550.1" fill="none" stroke="#a6a6a6" stroke-width="3.0" stroke-linejoin="round" stroke-linecap="butt"/>
<path d="M1701.7 1047.9L1703.2 1047.3L1704.7 1045.8L1706.2 1043.7L1707.7 1041.7L1709.2 1040.4L1710.7 1040.1L1712.2 1041.0L1713.7 1042.7L1715.2 1044.8L1716.7 1046.7L1718.2 1047.8L1719.7 1047.8L1721.2 1046.6L1722.7 1044.8L1724.2 1042.7L1725.7 1041.0L1727.2 1040.1L1728.7 1040.4L1730.2 1041.8L1731.7 1043.8L1733.1 1045.8L1734.6 1047.3L1736.1 1047.9L1737.6 1047.3L1739.1 1045.8L1740.6 1043.7L1742.1 1041.7L1743.6 1040.4L1745.1 1040.1L1746.6 1041.0L1748.1 1042.7L1749.6 1044.8L1751.1 1046.7L1752.6 1047.8L1754.1 1047.7L1755.6 1046.6L1757.1 1044.7L1758.6 1042.6L1760.1 1040.9L1761.6 1040.1L1763.1 1040.4L1764.6 1041.8L1766.1 1043.8L1767.6 1045.8L1769.1 1047.4L1770.6 1047.9L1772.1 1047.3L1773.6 1045.7L1775.1 1043.7L1776.5 1041.7L1778.0 1040.4L1779.5 1040.1L1781.0 1041.0L1782.5 1042.8L1784.0 1044.9L1785.5 1046.7L1787.0 1047.8L1788.5 1047.7L1790.0 1046.6L1791.5 1044.7L1793.0 1042.6L1794.5 1040.9L1796.0 1040.1L1797.5 1040.5L1799.0 1041.8L1800.5 1043.8L1802.0 1045.9L1803.5 1047.4L1805.0 1047.9L1806.5 1047.3L1808.0 1045.7L1809.5 1043.6L1811.0 1041.7L1812.5 1040.4L1814.0 1040.2L1815.5 1041.0L1817.0 1042.8L1818.5 1044.9L1820.0 1046.7L1821.4 1047.8L1822.9 1047.7L1824.4 1046.6L1825.9 1044.7L1827.4 1042.6L1828.9 1040.9L1830.4 1040.1L1831.9 1040.5L1833.4 1041.8L1834.9 1043.9L1836.4 1045.9L1837.9 1047.4L1839.4 1047.9L1840.9 1047.3L1842.4 1045.7L1843.9 1043.6L1845.4 1041.6L1846.9 1040.4L1848.4 1040.2L1849.9 1041.1L1851.4 1042.8L1852.9 1044.9L1854.4 1046.8L1855.9 1047.8L1857.4 1047.7L1858.9 1046.6L1860.4 1044.7L1861.9 1042.6L1863.4 1040.9L1864.8 1040.1L1866.3 1040.5L1867.8 1041.9L1869.3 1043.9L1870.8 1045.9L1872.3 1047.4L1873.8 1047.9L1875.3 1047.2L1876.8 1045.7L1878.3 1043.6L1879.8 1041.6L1881.3 1040.4L1882.8 1040.2L1884.3 1041.1L1885.8 1042.9L1887.3 1045.0L1888.8 1046.8L1890.3 1047.8L1891.8 1047.7L1893.3 1046.5L1894.8 1044.6L1896.3 1042.5L1897.8 1040.9L1899.3 1040.1L1900.8 1040.5L1902.3 1041.9L1903.8 1043.9L1905.3 1046.0L1906.8 1047.4L1908.3 1047.9L1909.7 1047.2L1911.2 1045.6L1912.7 1043.5L1914.2 1041.6L1915.7 1040.4L1917.2 1040.2L1918.7 1041.1L1920.2 1042.9L1921.7 1045.0L1923.2 1046.8L1924.7 1047.8L1926.2 1047.7L1927.7 1046.5L1929.2 1044.6L1930.7 1042.5L1932.2 1040.8L1933.7 1040.1L1935.2 1040.5L1936.7 1041.9L1938.2 1043.9L1939.7 1046.0L1941.2 1047.4L1942.7 1047.9L1944.2 1047.2L1945.7 1045.6L1947.2 1043.5L1948.7 1041.6L1950.2 1040.3L1951.7 1040.2L1953.1 1041.1L1954.6 1042.9L1956.1 1045.0L1957.6 1046.8L1959.1 1047.8L1960.6 1047.7L1962.1 1046.5L1963.6 1044.6L1965.1 1042.5L1966.6 1040.8L1968.1 1040.1L1969.6 1040.5L1971.1 1042.0L1972.6 1044.0L1974.1 1046.0L1975.6 1047.5L1977.1 1047.9L1978.6 1047.2" fill="none" stroke="#a6a6a6" stroke-width="3.0" stroke-linejoin="round" stroke-linecap="butt"/>
<path d="M1605 203.3L1627.2 225.7M1627.2 203.3L1605 225.7" stroke="#7d8087" stroke-width="2.8" stroke-linecap="round"/>
<path d="M849 1134.6L871.4 1157M871.4 1134.6L849 1157" stroke="#9a9da3" stroke-width="2.8" stroke-linecap="round"/>
<path d="M1242.60 311.90L1255.04 323.85L1242.60 335.80" fill="none" stroke="#7b7f87" stroke-width="3.2" stroke-linecap="round" stroke-linejoin="miter"/>
<path d="M1329.4 408.4V404.5A17.06 17.06 0 1 1 1346.9 404.5V408.4Z" fill="#f3c55c"/>
<rect x="1329.9" y="411.9" width="16.2" height="3.9" fill="#dcdde2"/><path d="M1330.7 419H1345.3A7.3 4.2 0 0 1 1330.7 419Z" fill="#dcdde2"/>
<circle cx="2376" cy="336" r="21.3" fill="#fb0f28"/><text transform="translate(2376.1 347.4) scale(1 0.86)" x="0" y="0" text-anchor="middle" font-family="Liberation Sans, sans-serif" font-weight="bold" font-size="41.3" fill="#1a1012" stroke="#1a1012" stroke-width="0.7" stroke-linejoin="round">!</text>
<path d="M2503.30 318.23Q2506.10 313.50 2508.90 318.23L2527.00 348.87Q2529.80 353.60 2524.30 353.60L2487.90 353.60Q2482.40 353.60 2485.20 348.87Z" fill="#ffb400"/><text transform="translate(2505.9 346.9) scale(1 0.86)" x="0" y="0" text-anchor="middle" font-family="Liberation Sans, sans-serif" font-weight="bold" font-size="36.6" fill="#1a1408" stroke="#1a1408" stroke-width="0.7" stroke-linejoin="round">!</text>
<path d="M2603.60 341.90L2615.85 330.46L2628.10 341.90" fill="none" stroke="#a9acb4" stroke-width="3.2" stroke-linecap="round" stroke-linejoin="miter"/>
<path d="M2679.30 330.10L2691.75 341.54L2704.20 330.10" fill="none" stroke="#a9acb4" stroke-width="3.2" stroke-linecap="round" stroke-linejoin="miter"/>
<rect x="2686.2" y="383.7" width="49.8" height="8.4" fill="#ff1730"/>
<rect x="2686.2" y="422.2" width="49.8" height="7.6" fill="#ff1730"/>
<rect x="2686.2" y="519.7" width="49.8" height="8.3" fill="#ff1730"/>
<rect x="2686.2" y="539.8" width="49.8" height="8.3" fill="#ff1730"/>
<rect x="2686.2" y="559.7" width="49.8" height="8.3" fill="#ff1730"/>
<rect x="2686.2" y="597.8" width="49.8" height="7.9" fill="#ff1730"/>
<rect x="2686.2" y="617.8" width="49.8" height="8.0" fill="#ff1730"/>
<rect x="2686.2" y="637.8" width="49.8" height="8.0" fill="#ff1730"/>
<rect x="2686.2" y="658" width="49.8" height="7.9" fill="#ff1730"/>
<rect x="2686.2" y="735.8" width="49.8" height="8.1" fill="#ff1730"/>
<rect x="2686.2" y="756.1" width="49.8" height="7.9" fill="#ff1730"/>
<rect x="2686.2" y="776.1" width="49.8" height="8.1" fill="#ff1730"/>
<rect x="2686.2" y="814" width="49.8" height="7.8" fill="#ff1730"/>
<rect x="2686.2" y="833.9" width="49.8" height="8.1" fill="#ff1730"/>
<rect x="2686.2" y="853.5" width="49.8" height="8.1" fill="#ff1730"/>
<rect x="2686.2" y="873.5" width="49.8" height="8.0" fill="#ff1730"/>
<rect x="2686.2" y="891.3" width="49.8" height="8.1" fill="#ff1730"/>
<rect x="2686.2" y="441.9" width="49.8" height="8.0" fill="#ffb400"/>
<rect x="2686.2" y="579.8" width="49.8" height="8.2" fill="#ffb400"/>
<rect x="2686.2" y="794" width="49.8" height="8.0" fill="#ffb400"/>
<rect x="2697.6" y="386.6" width="25.2" height="211.6" rx="12.6" fill="#ffffff" fill-opacity="0.75" stroke="#000" stroke-width="1.2"/>
<path d="M282 1235.4A24.2 24.2 0 0 1 282 1268.6Z" fill="#db5c5c"/>
<circle cx="388.1" cy="1392.3" r="24.9" fill="#db5c5c"/><text transform="translate(388.1 1407.6) scale(1 0.86)" x="0" y="0" text-anchor="middle" font-family="Liberation Sans, sans-serif" font-weight="bold" font-size="54.1" fill="#0d293e" stroke="#0d293e" stroke-width="0.9" stroke-linejoin="round">!</text>
<circle cx="388.1" cy="1462.3" r="24.9" fill="#db5c5c"/><text transform="translate(388.1 1477.6) scale(1 0.86)" x="0" y="0" text-anchor="middle" font-family="Liberation Sans, sans-serif" font-weight="bold" font-size="54.1" fill="#3d3e40" stroke="#3d3e40" stroke-width="0.9" stroke-linejoin="round">!</text>
<circle cx="388.1" cy="1532.3" r="24.9" fill="#db5c5c"/><text transform="translate(388.1 1547.6) scale(1 0.86)" x="0" y="0" text-anchor="middle" font-family="Liberation Sans, sans-serif" font-weight="bold" font-size="54.1" fill="#3d3e40" stroke="#3d3e40" stroke-width="0.9" stroke-linejoin="round">!</text>
<path d="M307 1302.9H342.1V1320.4A14 14 0 0 1 328.1 1334.4H321A14 14 0 0 1 307 1320.4Z" fill="#45322b" stroke="#c77d55" stroke-width="3.7" stroke-linejoin="round"/>
<path d="M342.1 1302.9H347.2A3.2 3.2 0 0 1 350.4 1306.1V1308A8.3 8.3 0 0 1 342.1 1316.3M307 1341.2H345.2" fill="none" stroke="#c77d55" stroke-width="3.7" stroke-linecap="round"/>
<path d="M203.10 1579.50L215.11 1591.80L203.10 1604.10" fill="none" stroke="#b4b8bf" stroke-width="3.8" stroke-linecap="round" stroke-linejoin="miter"/>
<path d="M2644.8 1290.3H2691.2M2644.8 1306.3H2682.2A8 8 0 0 1 2682.2 1322.2H2670.5M2676.8 1314.6L2669.4 1322.2L2676.8 1329.8M2644.8 1322.2H2658.6" fill="none" stroke="#ced0d6" stroke-width="3.3" stroke-linecap="round" stroke-linejoin="round"/>
<path d="M2644.8 1384.1H2658.6M2644.8 1400H2658.6M2644.8 1415.9H2691.2M2681.3 1383V1408.5M2671.3 1399.3L2681.3 1409.3L2691.3 1399.3" fill="none" stroke="#ced0d6" stroke-width="3.3" stroke-linecap="round" stroke-linejoin="round"/>
<path d="M2648 1480.9H2688.1M2661.4 1479.5V1475A4.5 4.5 0 0 1 2665.9 1470.5H2670.6A4.5 4.5 0 0 1 2675.1 1475V1479.5M2651.8 1482V1511.5A5 5 0 0 0 2656.8 1516.5H2679A5 5 0 0 0 2684 1511.5V1482M2662.2 1491.5V1505.5M2673.9 1491.5V1505.5" fill="none" stroke="#ced0d6" stroke-width="3.3" stroke-linecap="round" stroke-linejoin="round"/>
<rect x="51.5" y="1705.4" width="24.8" height="24.8" rx="5.5" fill="#25324d" stroke="#548af7" stroke-width="3.8"/>
<path d="M243.70 1703.00L255.88 1714.75L243.70 1726.50" fill="none" stroke="#9da0a8" stroke-width="3.0" stroke-linecap="round" stroke-linejoin="miter"/>
<path d="M435.00 1703.00L447.68 1714.75L435.00 1726.50" fill="none" stroke="#9da0a8" stroke-width="3.0" stroke-linecap="round" stroke-linejoin="miter"/>
<rect x="2750.4" y="1728.8" width="31.4" height="24.4" rx="4.8" fill="none" stroke="#ced0d6" stroke-width="3.8"/><path d="M2766 1737.8V1744.3" stroke="#ced0d6" stroke-width="3.8" stroke-linecap="round"/><path d="M2774.7 1727.5V1723.45A8.75 8.75 0 0 1 2792.2 1723.45V1728.7" fill="none" stroke="#ced0d6" stroke-width="3.8" stroke-linecap="round"/></svg>
<div class="t" style="left:340.20px;top:40.40px;font-size:46.5px;line-height:60px;color:#ffffff;-webkit-text-stroke:0.45px;-webkit-text-stroke:1.3px;transform:scaleX(.88);transform-origin:0 0;">L</div>
<div class="t" style="left:407.40px;top:37.30px;font-size:47px;line-height:61px;color:#bbbbbb;letter-spacing:-0.140px;-webkit-text-stroke:0.45px;">lab01</div>
<div class="t" style="left:1785.90px;top:39.40px;font-size:47px;line-height:61px;color:#f0f0f0;letter-spacing:0.430px;-webkit-text-stroke:0.45px;">Current File</div>
<div class="t" style="left:216.80px;top:185.60px;font-size:47px;line-height:61px;color:#bbbbbb;letter-spacing:0.036px;font-weight:bold;">Project</div>
<div class="t" style="left:287.70px;top:292.50px;font-size:47px;line-height:61px;color:#bbbbbb;letter-spacing:0.114px;font-weight:bold;">lab01</div>
<div class="t" style="left:433.20px;top:292.50px;font-size:47px;line-height:61px;color:#7d7d7d;letter-spacing:1.150px;-webkit-text-stroke:0.45px;width:594.0px;overflow:hidden;">~/Downloads/skeleton-fa24/lab01</div>
<div class="t" style="left:351.00px;top:362.50px;font-size:47px;line-height:61px;color:#bbbbbb;letter-spacing:-0.095px;-webkit-text-stroke:0.45px;">.idea</div>
<div class="t" style="left:352.30px;top:432.50px;font-size:47px;line-height:61px;color:#bbbbbb;letter-spacing:1.711px;-webkit-text-stroke:0.45px;">out</div>
<div class="t" style="left:352.30px;top:502.50px;font-size:47px;line-height:61px;color:#bbbbbb;letter-spacing:1.424px;-webkit-text-stroke:0.45px;">src</div>
<div class="t" style="left:415.40px;top:572.50px;font-size:47px;line-height:61px;color:#bbbbbb;letter-spacing:1.041px;-webkit-text-stroke:0.45px;">Arithmetic</div>
<div class="t" style="left:353.30px;top:642.50px;font-size:47px;line-height:61px;color:#bbbbbb;letter-spacing:1.511px;-webkit-text-stroke:0.45px;">tests</div>
<div class="t" style="left:415.40px;top:712.50px;font-size:47px;line-height:61px;color:#bbbbbb;letter-spacing:1.441px;-webkit-text-stroke:0.45px;">ArithmeticTest</div>
<div class="t" style="left:350.30px;top:782.50px;font-size:47px;line-height:61px;color:#bbbbbb;letter-spacing:0.294px;-webkit-text-stroke:0.45px;">lab01.iml</div>
<div class="t" style="left:288.90px;top:852.50px;font-size:47px;line-height:61px;color:#bbbbbb;letter-spacing:0.469px;-webkit-text-stroke:0.45px;">External Libraries</div>
<div class="t" style="left:289.90px;top:922.50px;font-size:47px;line-height:61px;color:#bbbbbb;letter-spacing:0.540px;-webkit-text-stroke:0.45px;">Scratches and Consoles</div>
<div class="t" style="left:1145.00px;top:182.30px;font-size:47px;line-height:61px;color:#bbbbbb;letter-spacing:1.041px;-webkit-text-stroke:0.45px;">ArithmeticTest.java</div>
<div class="t" style="left:216.40px;top:1115.10px;font-size:47px;line-height:61px;color:#bbbbbb;letter-spacing:-1.142px;font-weight:bold;">Build</div>
<div class="t" style="left:501.50px;top:1115.10px;font-size:47px;line-height:61px;color:#bbbbbb;letter-spacing:0.945px;-webkit-text-stroke:0.45px;">Build Output</div>
<div class="t" style="left:301.80px;top:1224.00px;font-size:47px;line-height:61px;color:#bbbbbb;letter-spacing:0.363px;font-weight:bold;">lab01:</div>
<div class="t" style="left:448.70px;top:1224.00px;font-size:47px;line-height:61px;color:#bbbbbb;letter-spacing:1.256px;-webkit-text-stroke:0.45px;">build failed</div>
<div class="t" style="left:701.00px;top:1224.00px;font-size:47px;line-height:61px;color:#7d7d7d;letter-spacing:0.945px;-webkit-text-stroke:0.45px;">At 8</div>
<div class="t" style="left:799.20px;top:1224.00px;font-size:47px;line-height:61px;color:#7d7d7d;letter-spacing:-1.207px;-webkit-text-stroke:0.45px;">4 sec, 323 ms</div>
<div class="t" style="left:367.10px;top:1293.00px;font-size:47px;line-height:61px;color:#bbbbbb;letter-spacing:0.638px;-webkit-text-stroke:0.45px;">Arithmetic.java</div>
<div class="t" style="left:700.00px;top:1293.00px;font-size:47px;line-height:61px;color:#7d7d7d;letter-spacing:0.996px;-webkit-text-stroke:0.45px;">src 3 errors</div>
<div class="t" style="left:426.80px;top:1363.00px;font-size:47px;line-height:61px;color:#bbbbbb;letter-spacing:0.930px;-webkit-text-stroke:0.45px;width:665.0px;overflow:hidden;">package edu.princeton.cs.algs4 does not exist</div>
<div class="t" style="left:427.80px;top:1433.00px;font-size:47px;line-height:61px;color:#bbbbbb;letter-spacing:0.900px;-webkit-text-stroke:0.45px;width:665.0px;overflow:hidden;">cannot find symbol variable StdRandom</div>
<div class="t" style="left:427.80px;top:1503.00px;font-size:47px;line-height:61px;color:#bbbbbb;letter-spacing:0.900px;-webkit-text-stroke:0.45px;width:665.0px;overflow:hidden;">cannot find symbol variable StdRandom</div>
<div class="t" style="left:90.30px;top:1684.30px;font-size:47px;line-height:61px;color:#bbbbbb;letter-spacing:0.135px;-webkit-text-stroke:0.45px;">lab01</div>
<div class="t" style="left:293.00px;top:1684.30px;font-size:47px;line-height:61px;color:#bbbbbb;letter-spacing:1.561px;-webkit-text-stroke:0.45px;">tests</div>
<div class="t" style="left:555.80px;top:1684.30px;font-size:47px;line-height:61px;color:#bbbbbb;letter-spacing:1.433px;-webkit-text-stroke:0.45px;">ArithmeticTest</div>
<div class="t" style="left:1858.20px;top:1702.20px;font-size:47px;line-height:61px;color:#bbbbbb;letter-spacing:1.321px;-webkit-text-stroke:0.45px;">8:56</div>
<div class="t" style="left:2053.40px;top:1702.20px;font-size:47px;line-height:61px;color:#bbbbbb;letter-spacing:-2.039px;-webkit-text-stroke:0.45px;">LF</div>
<div class="t" style="left:2205.00px;top:1702.20px;font-size:47px;line-height:61px;color:#bbbbbb;letter-spacing:1.497px;-webkit-text-stroke:0.45px;">UTF-8</div>
<div class="t" style="left:2445.50px;top:1702.20px;font-size:47px;line-height:61px;color:#bbbbbb;letter-spacing:0.741px;-webkit-text-stroke:0.45px;">4 spaces</div>
<div class="t" style="left:2409.00px;top:310.80px;font-size:39px;line-height:51px;color:#ffffff;letter-spacing:2.110px;-webkit-text-stroke:0.45px;">24</div>
<div class="t" style="left:2539.00px;top:310.80px;font-size:39px;line-height:51px;color:#ffffff;-webkit-text-stroke:0.45px;">3</div>
<div class="t" style="left:361.35px;top:580.20px;font-size:34px;line-height:44px;color:#548af7;letter-spacing:0.550px;-webkit-text-stroke:0.45px;-webkit-text-stroke:0.3px;">C</div>
<div class="t" style="left:361.35px;top:720.60px;font-size:34px;line-height:44px;color:#548af7;letter-spacing:0.550px;-webkit-text-stroke:0.45px;-webkit-text-stroke:0.3px;">C</div>
<div class="t" style="left:1085.70px;top:192.30px;font-size:34px;line-height:44px;color:#548af7;letter-spacing:0.550px;-webkit-text-stroke:0.45px;-webkit-text-stroke:0.3px;">C</div>
<div class="t" style="left:499.70px;top:1692.20px;font-size:34px;line-height:44px;color:#548af7;letter-spacing:0.550px;-webkit-text-stroke:0.45px;-webkit-text-stroke:0.3px;">C</div>
<div class="t" style="left:62.80px;top:1423.40px;font-size:46.5px;line-height:60px;color:#ced0d6;letter-spacing:0.550px;-webkit-text-stroke:0.45px;-webkit-text-stroke:0.3px;">!</div>
</div></body></html>
